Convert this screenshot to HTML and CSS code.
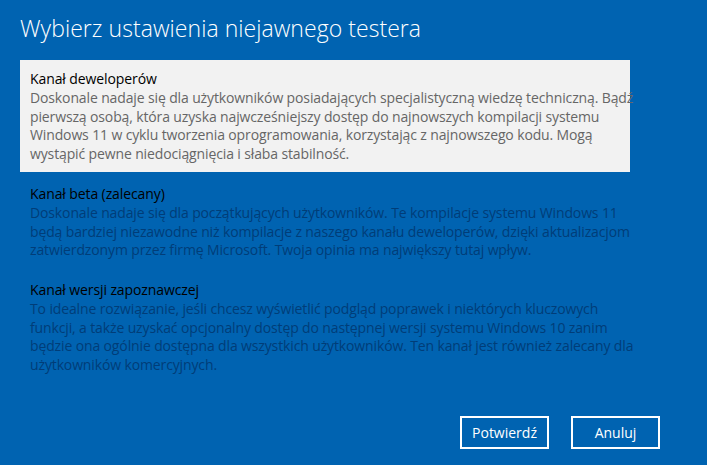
FILE: index.html
```html
<!DOCTYPE html>
<html lang="pl">
<head>
  <meta charset="UTF-8">
  <title>Niejawny tester</title>
  <link rel="stylesheet" href="styles.css">
</head>
<body>
  <div class="dialog">
    <h1>Wybierz ustawienia niejawnego testera</h1>
    <div class="options">
      <div class="option selected">
        <div class="name">Kanał deweloperów</div>
        <p class="desc">Doskonale nadaje się dla użytkowników posiadających specjalistyczną wiedzę techniczną. Bądź<br>pierwszą osobą, która uzyska najwcześniejszy dostęp do najnowszych kompilacji systemu<br>Windows 11 w cyklu tworzenia oprogramowania, korzystając z najnowszego kodu. Mogą<br>wystąpić pewne niedociągnięcia i słaba stabilność.</p>
      </div>
      <div class="option">
        <div class="name">Kanał beta (zalecany)</div>
        <p class="desc">Doskonale nadaje się dla początkujących użytkowników. Te kompilacje systemu Windows 11<br>będą bardziej niezawodne niż kompilacje z naszego kanału deweloperów, dzięki aktualizacjom<br>zatwierdzonym przez firmę Microsoft. Twoja opinia ma największy tutaj wpływ.</p>
      </div>
      <div class="option">
        <div class="name">Kanał wersji zapoznawczej</div>
        <p class="desc">To idealne rozwiązanie, jeśli chcesz wyświetlić podgląd poprawek i niektórych kluczowych<br>funkcji, a także uzyskać opcjonalny dostęp do następnej wersji systemu Windows 10 zanim<br>będzie ona ogólnie dostępna dla wszystkich użytkowników. Ten kanał jest również zalecany dla<br>użytkowników komercyjnych.</p>
      </div>
    </div>
    <div class="actions">
      <button class="btn">Potwierdź</button>
      <button class="btn">Anuluj</button>
    </div>
  </div>
</body>
</html>
```

FILE: styles.css
```css
html, body {
  height: 100%;
}
body {
  margin: 0;
  background-color: #0063b1;
  font-family: "Open Sans", "Noto Sans", sans-serif;
  color: #fff;
}
.dialog {
  height: 100%;
  box-sizing: border-box;
  display: flex;
  flex-direction: column;
  padding: 12px 0 16px 20px;
}
h1 {
  margin: 0;
  font-size: 23px;
  font-weight: 300;
  line-height: 32px;
  letter-spacing: 0.05px;
}
.options {
  margin-top: 16px;
  width: 610px;
  display: flex;
  flex-direction: column;
  gap: 3px;
}
.option {
  padding: 9px 10px 8px;
}
.option.selected {
  background: #f2f2f2;
}
.name {
  font-size: 14px;
  line-height: 19px;
  color: #000;
  letter-spacing: -0.1px;
}
.desc {
  margin: 1px 0 0;
  font-size: 14px;
  line-height: 18.7px;
  letter-spacing: -0.13px;
  color: #003d78;
  white-space: nowrap;
}
.selected .desc {
  color: #666;
}
.actions {
  margin-top: auto;
  display: flex;
  justify-content: flex-end;
  gap: 22px;
  padding-right: 47px;
}
.btn {
  width: 89px;
  height: 33px;
  background: transparent;
  border: 2px solid #fff;
  color: #fff;
  font-family: inherit;
  font-size: 14px;
}
```
